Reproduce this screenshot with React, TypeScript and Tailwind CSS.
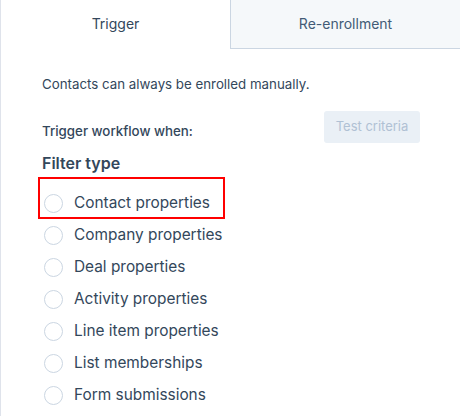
import React from 'react';

const filterTypes = [
  'Contact properties',
  'Company properties',
  'Deal properties',
  'Activity properties',
  'Line item properties',
  'List memberships',
  'Form submissions',
];

export default function App() {
  return (
    <div
      className="relative w-[460px] h-[416px] overflow-hidden bg-white border-l border-[#dfe3eb] text-[#33475b]"
      style={{ fontFamily: 'Inter, Lato, sans-serif' }}
    >
      {/* Tabs */}
      <div className="flex h-[49px]">
        <div className="flex-1 flex items-center justify-center pb-[2px] text-[14px] text-[#33475b]">
          Trigger
        </div>
        <div className="flex-1 flex items-center justify-center pb-[2px] text-[14px] text-[#425b76] bg-[#f5f8fa] border-l border-b border-[#cbd6e2]">
          Re-enrollment
        </div>
      </div>

      {/* Content */}
      <div className="pl-[41px] pr-[40px] pt-[26px]">
        <p className="text-[13.3px] leading-[18px]">Contacts can always be enrolled manually.</p>

        <div className="mt-[18px] flex items-center justify-between h-[32px]">
          <span className="pt-[8px] text-[13.3px] leading-[18px] font-medium">Trigger workflow when:</span>
          <button className="w-[96px] h-[32px] rounded-[3px] bg-[#eaf0f6] text-[13px] text-[#b0c1d4]">
            Test criteria
          </button>
        </div>

        <h3 className="mt-[10px] text-[16px] leading-[20px] font-semibold">Filter type</h3>

        <ul className="mt-[14px] ml-[2px]">
          {filterTypes.map((label) => (
            <li key={label} className="flex items-center h-[32px]">
              <span className="w-[19px] h-[19px] rounded-full border border-[#cbd6e2] bg-white shrink-0" />
              <span className="ml-[11px] text-[15.4px] leading-[20px]">{label}</span>
            </li>
          ))}
        </ul>
      </div>

      {/* Highlight annotation */}
      <div className="absolute left-[37px] top-[177px] w-[187px] h-[42px] border-2 border-[#ff0000] pointer-events-none" />
    </div>
  );
}
